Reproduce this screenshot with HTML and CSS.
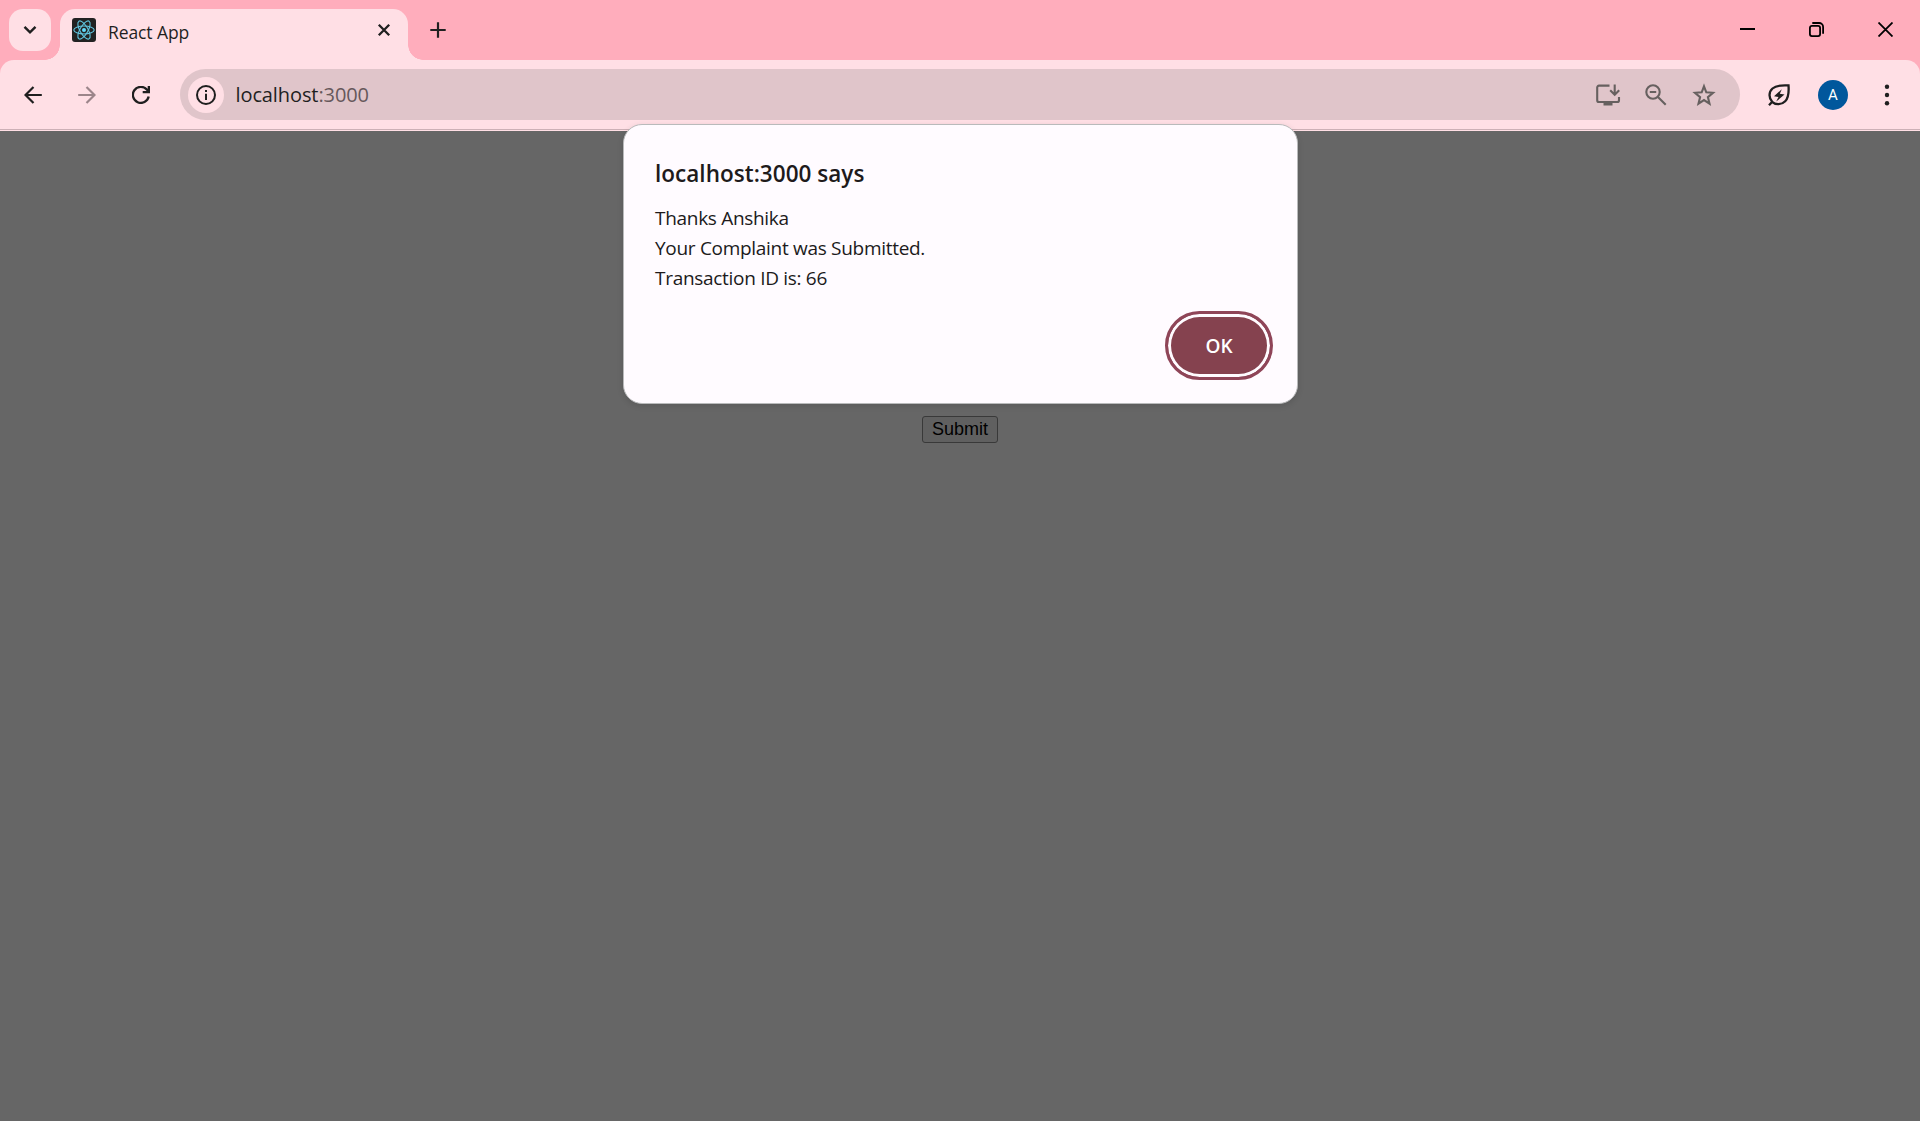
FILE: index.html
```html
<!DOCTYPE html>
<html lang="en">
<head>
<meta charset="utf-8">
<title>React App</title>
<link rel="stylesheet" href="styles.css">
</head>
<body>
<div class="browser">
  <header class="tab-strip">
    <button class="tab-search" aria-label="Search tabs">
      <svg width="14" height="10" viewBox="0 0 14 10"><path d="M1.500 1.800l5.500 5.500 5.500-5.500" fill="none" stroke="#1f1f1f" stroke-width="2.4"/></svg>
    </button>
    <div class="tab">
      <svg class="favicon" width="24" height="24" viewBox="0 0 24 24">
        <rect width="24" height="24" rx="3" fill="#222"/>
        <g fill="none" stroke="#61c5e0" stroke-width="1.1">
          <ellipse cx="12" cy="12" rx="10.2" ry="4"/>
          <ellipse cx="12" cy="12" rx="10.2" ry="4" transform="rotate(60 12 12)"/>
          <ellipse cx="12" cy="12" rx="10.2" ry="4" transform="rotate(120 12 12)"/>
        </g>
        <circle cx="12" cy="12" r="2" fill="#61dafb"/>
      </svg>
      <span class="tab-title">React App</span>
      <svg class="tab-close" width="14" height="14" viewBox="0 0 14 14"><path d="M1.800 1.800l10.400 10.400M12.200 1.800L1.800 12.200" stroke="#1f1f1f" stroke-width="2.3"/></svg>
    </div>
    <button class="new-tab" aria-label="New tab">
      <svg width="16" height="16" viewBox="0 0 16 16"><path d="M8 .3v15.400M.3 8h15.400" stroke="#1f1f1f" stroke-width="2.2"/></svg>
    </button>
    <div class="window-controls">
      <span><svg width="15" height="15" viewBox="0 0 15 15"><path d="M0 7h15" stroke="#000" stroke-width="2"/></svg></span>
      <span><svg width="15" height="15" viewBox="0 0 15 15" fill="none" stroke="#000" stroke-width="1.8"><rect x=".9" y="3.900" width="10.200" height="10.200" rx="2"/><path d="M3.300 1h6.800a4 4 0 0 1 4 4v6.800"/></svg></span>
      <span><svg width="15" height="15" viewBox="0 0 15 15"><path d="M.5.500l14 14M14.500.5L.5 14.500" stroke="#000" stroke-width="1.8"/></svg></span>
    </div>
  </header>

  <nav class="toolbar">
    <span class="tool"><svg width="18" height="18" viewBox="0 0 18 18"><path d="M17.800 9H1.800M9.500 1L1.500 9l8 8" fill="none" stroke="#1f1f1f" stroke-width="2.2"/></svg></span>
    <span class="tool"><svg width="18" height="18" viewBox="0 0 18 18"><path d="M.2 9h16M8.500 1l8 8-8 8" fill="none" stroke="#9c858a" stroke-width="2.2"/></svg></span>
    <span class="tool"><svg width="18" height="18" viewBox="0 0 18 18"><path d="M16.700 10.600A8 8 0 1 1 14.700 3.400L17 5.800" fill="none" stroke="#1f1f1f" stroke-width="2.3"/><path d="M18 0v7.300h-7.300V5h5V0z" fill="#1f1f1f"/></svg></span>
    <div class="omnibox">
      <span class="site-info"><svg width="20" height="20" viewBox="0 0 20 20"><circle cx="10" cy="10" r="9" fill="none" stroke="#1f1f1f" stroke-width="2"/><path d="M9 8.800h2V15H9zM9 5h2v2.100H9z" fill="#1f1f1f"/></svg></span>
      <span class="url">localhost<span class="port">:3000</span></span>
      <div class="page-actions">
        <span><svg width="26" height="24" viewBox="0 0 26 24"><path d="M14.500 2.600H4A1.800 1.800 0 0 0 2.200 4.400v12.800A1.800 1.800 0 0 0 4 19h18.200a1.800 1.800 0 0 0 1.800-1.800V14M19.700 1.600v9.800M15.200 7.200l4.500 4.500 4.500-4.500" fill="none" stroke="#66605f" stroke-width="2.1"/><path d="M8.500 19h9v3.500h-9z" fill="#66605f"/></svg></span>
        <span><svg width="24" height="24" viewBox="0 0 24 24" fill="none" stroke="#66605f" stroke-width="2.1"><circle cx="9" cy="9" r="6.700"/><path d="M5.800 9h6.400M13.700 13.700l8 8"/></svg></span>
        <span><svg width="24" height="24" viewBox="0 0 24 24"><path d="M12 3.300l2.300 6 6.700.5-5.100 4.300 1.600 6.500-5.500-3.500-5.500 3.500 1.600-6.500L3 9.800l6.700-.5z" fill="none" stroke="#66605f" stroke-width="2.1"/></svg></span>
      </div>
    </div>
    <div class="profile-tools">
      <span class="tool"><svg width="24" height="24" viewBox="0 0 24 24"><path d="M2 22.200l3.200-3.400C1.600 15 1.600 9 5.500 5.500 9 2.400 15 2 21.500 2.400c.5 6.600.1 12.400-3.300 15.800-3.800 3.800-9.400 4-13.200.6" fill="none" stroke="#1f1f1f" stroke-width="2.300"/><path d="M14.800 6.200L7 13.300l4.500.8-2.300 4.500 8.300-7-4.700-.9z" fill="#1f1f1f"/></svg></span>
      <span class="tool"><span class="avatar">A</span></span>
      <span class="tool"><svg width="6" height="22" viewBox="0 0 6 22" fill="#1f1f1f"><circle cx="3" cy="2.700" r="2.200"/><circle cx="3" cy="11" r="2.200"/><circle cx="3" cy="19.300" r="2.200"/></svg></span>
    </div>
  </nav>

  <main class="page">
    <button class="submit">Submit</button>
  </main>

  <section class="dialog" role="alertdialog">
    <h1 class="dialog-title">localhost:3000 says</h1>
    <p class="dialog-message">Thanks Anshika<br>Your Complaint was Submitted.<br>Transaction ID is: 66</p>
    <button class="ok">OK</button>
  </section>
</div>
</body>
</html>
```
FILE: styles.css
```css
* { box-sizing: border-box; }
body { margin: 0; font-family: "Open Sans", "Noto Sans", sans-serif; color: #1f1f1f; }
svg { display: block; }
button { border: 0; padding: 0; font: inherit; }

.browser {
  position: relative;
  display: flex;
  flex-direction: column;
  height: 1121px;
  overflow: hidden;
  background: #ffadbc;
}

.tab-strip { display: flex; align-items: flex-start; height: 60px; padding-left: 9px; }
.tab-search {
  display: grid;
  place-items: center;
  width: 42px;
  height: 42px;
  margin: 9px 9px 0 0;
  border-radius: 14px;
  background: #ffdfe5;
}
.tab {
  position: relative;
  display: flex;
  align-items: center;
  width: 348px;
  height: 51px;
  margin-top: 9px;
  padding: 0 17px 9px 12px;
  border-radius: 15px 15px 0 0;
  background: #ffdfe5;
}
.tab::before, .tab::after {
  content: "";
  position: absolute;
  bottom: 0;
  width: 15px;
  height: 15px;
}
.tab::before { left: -15px; background: radial-gradient(circle at 0 0, transparent 14.5px, #ffdfe5 15px); }
.tab::after { right: -15px; background: radial-gradient(circle at 100% 0, transparent 14.5px, #ffdfe5 15px); }
.tab-title { margin: 3px 0 0 12px; font-size: 17.5px; line-height: 24px; letter-spacing: -0.1px; }
.tab-close { margin-left: auto; }
.new-tab { margin: 22px 0 0 22px; background: none; }
.window-controls { display: flex; margin-left: auto; }
.window-controls span { display: grid; place-items: center; width: 69px; height: 59px; }

.toolbar {
  display: flex;
  align-items: center;
  height: 71px;
  padding: 0 6px 2px;
  border-radius: 14px 14px 0 0;
  background: linear-gradient(#ffdfe5 69px, #cdb0b6 69px, #cdb0b6 70px, #ffdfe5 70px);
}
.tool { display: grid; place-items: center; width: 54px; height: 52px; }
.omnibox {
  display: flex;
  align-items: center;
  width: 1560px;
  height: 51px;
  margin: 0 12px;
  padding: 0 12px 0 8px;
  border-radius: 26px;
  background: #e0c5ca;
}
.site-info { display: grid; place-items: center; width: 36px; height: 36px; border-radius: 50%; background: #ffdfe5; }
.url { margin: 1px 0 0 11.5px; font-size: 20px; line-height: 28px; letter-spacing: -0.1px; }
.port { color: #66585b; }
.page-actions { display: flex; margin-left: auto; }
.page-actions span { display: grid; place-items: center; width: 48px; }
.profile-tools { display: flex; }
.avatar {
  width: 30px;
  height: 30px;
  border-radius: 50%;
  background: #00579c;
  color: #fff;
  font: 15px/31px Roboto, sans-serif;
  text-align: center;
}

.page { flex: 1; display: flex; justify-content: center; align-items: flex-start; padding-top: 285px; background: #666; }
.submit {
  width: 76px;
  height: 27px;
  padding-bottom: 1px;
  border: 1px solid #393939;
  border-radius: 3px;
  background: #606060;
  color: #000;
  font: 18px/23px "Liberation Sans", Arial, sans-serif;
}

.dialog {
  position: absolute;
  top: 124px;
  left: 623px;
  display: flex;
  flex-direction: column;
  width: 675px;
  height: 280px;
  padding: 32px 24px 23px 31px;
  border: 1px solid #b9babb;
  border-radius: 19px;
  background: #fffbff;
  box-shadow: 0 2px 6px rgba(0, 0, 0, .12);
  color: #201a1b;
}
.dialog-title { margin: 0; font-size: 22.5px; font-weight: 600; line-height: 34px; letter-spacing: 0.03px; white-space: nowrap; }
.dialog-message { margin: 12px 0 0; font-size: 19px; line-height: 30px; letter-spacing: -0.3px; white-space: nowrap; }
.ok {
  align-self: flex-end;
  width: 108px;
  height: 69px;
  margin-top: auto;
  border: 3px solid #8f4558;
  border-radius: 35px;
  background: #85424f;
  box-shadow: inset 0 0 0 3px #fffbff;
  color: #fff;
  font-size: 19px;
  font-weight: 600;
  line-height: 62px;
}
```
